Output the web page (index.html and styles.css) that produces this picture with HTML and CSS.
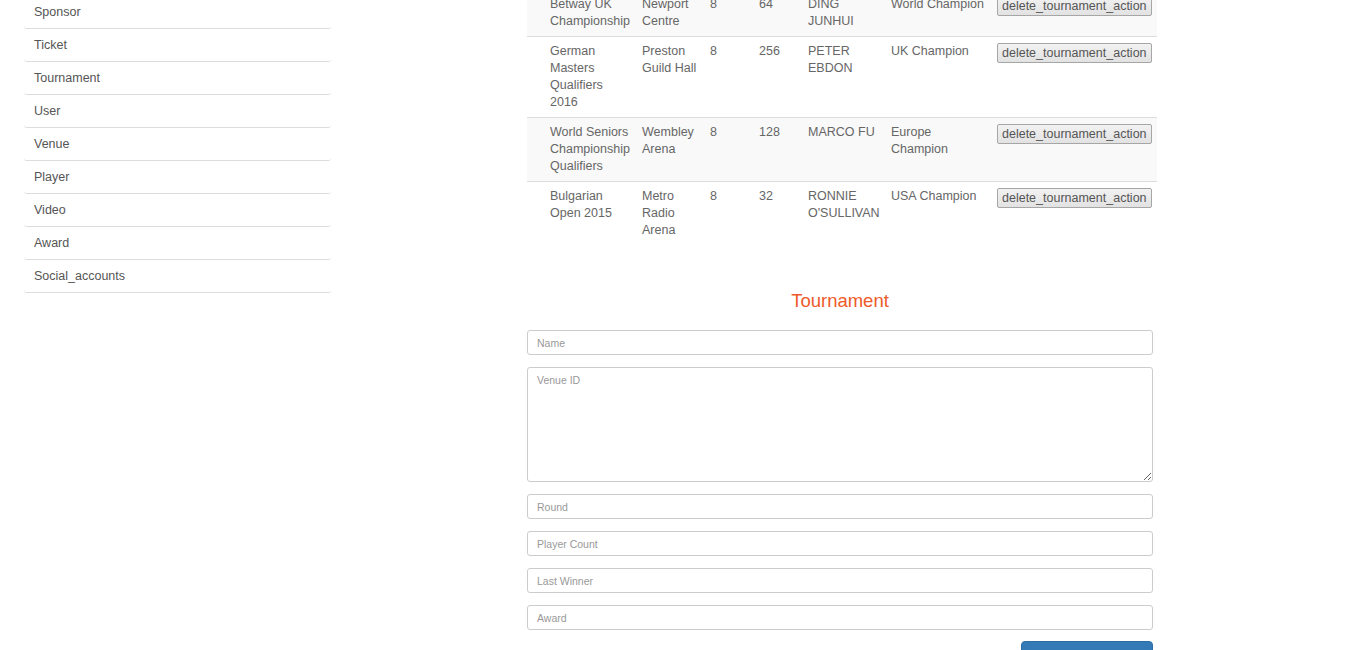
FILE: index.html
```html
<!DOCTYPE html>
<html>
<head>
<meta charset="utf-8">
<title>Tournament</title>
<link rel="stylesheet" href="styles.css">
</head>
<body>
<div class="page">
  <aside class="sidebar">
    <ul class="nav-list">
      <li class="nav-item">Sponsor</li>
      <li class="nav-item">Ticket</li>
      <li class="nav-item">Tournament</li>
      <li class="nav-item">User</li>
      <li class="nav-item">Venue</li>
      <li class="nav-item">Player</li>
      <li class="nav-item">Video</li>
      <li class="nav-item">Award</li>
      <li class="nav-item">Social_accounts</li>
    </ul>
  </aside>
  <main class="content">
    <table class="data-table">
      <colgroup>
        <col class="c0"><col class="c1"><col class="c2"><col class="c3"><col class="c4"><col class="c5"><col class="c6"><col class="c7">
      </colgroup>
      <tbody>
        <tr class="striped">
          <td></td><td>Betway UK Championship</td><td>Newport Centre</td><td>8</td><td>64</td><td>DING JUNHUI</td><td>World Champion</td><td><button class="del-btn">delete_tournament_action</button></td>
        </tr>
        <tr>
          <td></td><td>German Masters Qualifiers 2016</td><td>Preston Guild Hall</td><td>8</td><td>256</td><td>PETER EBDON</td><td>UK Champion</td><td><button class="del-btn">delete_tournament_action</button></td>
        </tr>
        <tr class="striped">
          <td></td><td>World Seniors Championship Qualifiers</td><td>Wembley Arena</td><td>8</td><td>128</td><td>MARCO FU</td><td>Europe Champion</td><td><button class="del-btn">delete_tournament_action</button></td>
        </tr>
        <tr>
          <td></td><td>Bulgarian Open 2015</td><td>Metro Radio Arena</td><td>8</td><td>32</td><td>RONNIE O'SULLIVAN</td><td>USA Champion</td><td><button class="del-btn">delete_tournament_action</button></td>
        </tr>
      </tbody>
    </table>

    <form class="t-form">
      <h2 class="form-title">Tournament</h2>
      <input class="field" type="text" placeholder="Name" autofocus>
      <textarea class="field area" placeholder="Venue ID"></textarea>
      <input class="field" type="text" placeholder="Round">
      <input class="field" type="text" placeholder="Player Count">
      <input class="field" type="text" placeholder="Last Winner">
      <input class="field" type="text" placeholder="Award">
      <div class="actions">
        <button type="button" class="add-btn">add_tournament_action</button>
      </div>
    </form>
  </main>
</div>
</body>
</html>
```
FILE: styles.css
```css
html, body {
  margin: 0;
  padding: 0;
  background: #fff;
}
body {
  font-family: "Liberation Sans", Arial, sans-serif;
  font-size: 12.5px;
  color: #555;
}
.page {
  display: flex;
  align-items: flex-start;
}
.sidebar {
  width: 307px;
  margin-left: 24px;
  margin-top: -4px;
}
.nav-list {
  list-style: none;
  margin: 0;
  padding: 0;
}
.nav-item {
  padding: 8px 10px;
  line-height: 16px;
  border-bottom: 1px solid #dddddd;
  border-radius: 3px;
  color: #555;
}
.content {
  width: 630px;
  margin-left: 196px;
  margin-top: -11px;
}
.data-table {
  width: 630px;
  border-collapse: collapse;
  table-layout: fixed;
  color: #666;
}
.c0 { width: 18px; }
.c1 { width: 92px; }
.c2 { width: 68px; }
.c3 { width: 49px; }
.c4 { width: 49px; }
.c5 { width: 83px; }
.c6 { width: 106px; }
.c7 { width: 165px; }
.data-table td {
  padding: 6px 5px;
  line-height: 17px;
  vertical-align: top;
  border-top: 1px solid #dddddd;
}
.striped td {
  background: #f9f9f9;
}
.del-btn {
  font-family: "Liberation Sans", Arial, sans-serif;
  font-size: 12.5px;
  line-height: 16px;
  color: #555;
  padding: 1px 4px;
  border: 1px solid #a6a6a6;
  border-radius: 2px;
  background: linear-gradient(#f2f2f2, #e2e2e2);
  white-space: nowrap;
  display: block;
}
.t-form {
  width: 626px;
  display: flex;
  flex-direction: column;
  gap: 12px;
  margin-top: 45px;
}
.form-title {
  margin: 0 0 6px 0;
  text-align: center;
  font-weight: normal;
  font-size: 18.5px;
  line-height: 22px;
  color: #ee5a2a;
}
.field {
  box-sizing: border-box;
  width: 626px;
  height: 25px;
  margin: 0;
  padding: 4px 9px;
  font-family: "Liberation Sans", Arial, sans-serif;
  font-size: 10.5px;
  color: #555;
  border: 1px solid #cccccc;
  border-radius: 3px;
  background: #fff;
}
.field:focus {
  outline: none;
}
.field::placeholder {
  color: #999;
}
.area {
  height: 115px;
  padding-top: 6px;
  resize: both;
}
.actions {
  display: flex;
  justify-content: flex-end;
  margin-top: -1px;
}
.add-btn {
  font-family: "Liberation Sans", Arial, sans-serif;
  font-size: 11px;
  line-height: 16px;
  color: #fff;
  background: #337ab7;
  border: 1px solid #2e6da4;
  border-radius: 4px;
  padding: 5px 4px 6px;
  width: 132px;
  white-space: nowrap;
  overflow: hidden;
}
```
